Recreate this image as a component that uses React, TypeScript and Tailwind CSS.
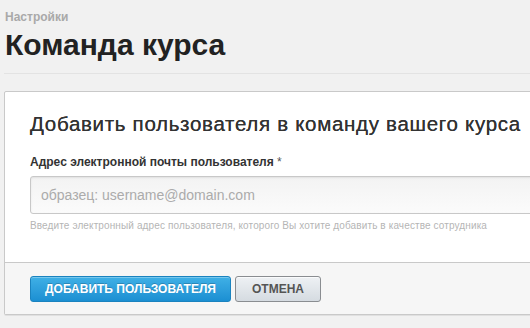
export default function App() {
  return (
    <div className="h-[328px] w-[530px] overflow-hidden bg-[#f1f1f1] font-['Liberation_Sans',Arial,sans-serif]">
      <div className="pl-[5px] pt-[10px]">
        <div className="text-[12px] font-bold leading-[14px] text-[#a9a9a9]">Настройки</div>
        <h1 className="mt-[3px] text-[30px] font-bold leading-[35px] text-[#222]">Команда курса</h1>
      </div>
      <div className="ml-[4px] mt-[11px] border-b border-[#e3e3e3]" />
      <div className="ml-[4px] mr-[-20px] mt-[17px] rounded-[2px] border border-[#c9c9c9] bg-white shadow-[0_1px_0_#e0e0e0]">
        <div className="pl-[25px] pt-[19px] pb-[30px]">
          <h2 className="text-[20.5px] leading-[26px] tracking-[0.7px] text-[#333] [text-shadow:0_0_0.4px_#333]">
            Добавить пользователя в команду вашего курса
          </h2>
          <label className="mt-[18px] block text-[12px] font-bold leading-[14px] text-[#333]">
            Адрес электронной почты пользователя <span className="font-normal text-[#555]">*</span>
          </label>
          <input
            type="text"
            placeholder="образец: username@domain.com"
            className="mt-[7px] block h-[38px] w-[540px] rounded-[3px] border border-[#c8c8c8] bg-gradient-to-b from-[#f3f3f3] to-[#fbfbfb] px-[10px] text-[14px] text-[#333] shadow-[inset_0_1px_2px_rgba(0,0,0,0.08)] outline-none placeholder:text-[#ababab]"
          />
          <div className="mt-[6px] text-[10px] leading-[12px] tracking-[0.12px] text-[#b5b5b5]">
            Введите электронный адрес пользователя, которого Вы хотите добавить в качестве сотрудника
          </div>
        </div>
        <div className="flex gap-[4px] border-t border-[#c9c9c9] bg-[#f6f6f6] pb-[12px] pl-[25px] pt-[13px]">
          <button className="h-[26px] w-[201px] rounded-[3px] border border-[#1b83bf] bg-gradient-to-b from-[#3fb0e6] to-[#1b8fd2] text-[12px] font-bold uppercase text-white [text-shadow:0_-1px_0_rgba(0,0,0,0.2)] shadow-[inset_0_1px_0_rgba(255,255,255,0.3)]">
            Добавить пользователя
          </button>
          <button className="h-[26px] w-[86px] rounded-[3px] border border-[#8a8d91] bg-gradient-to-b from-[#eef1f4] to-[#d5dbe1] text-[12px] font-bold uppercase text-[#555] shadow-[inset_0_1px_0_rgba(255,255,255,0.7)]">
            Отмена
          </button>
        </div>
      </div>
    </div>
  );
}
